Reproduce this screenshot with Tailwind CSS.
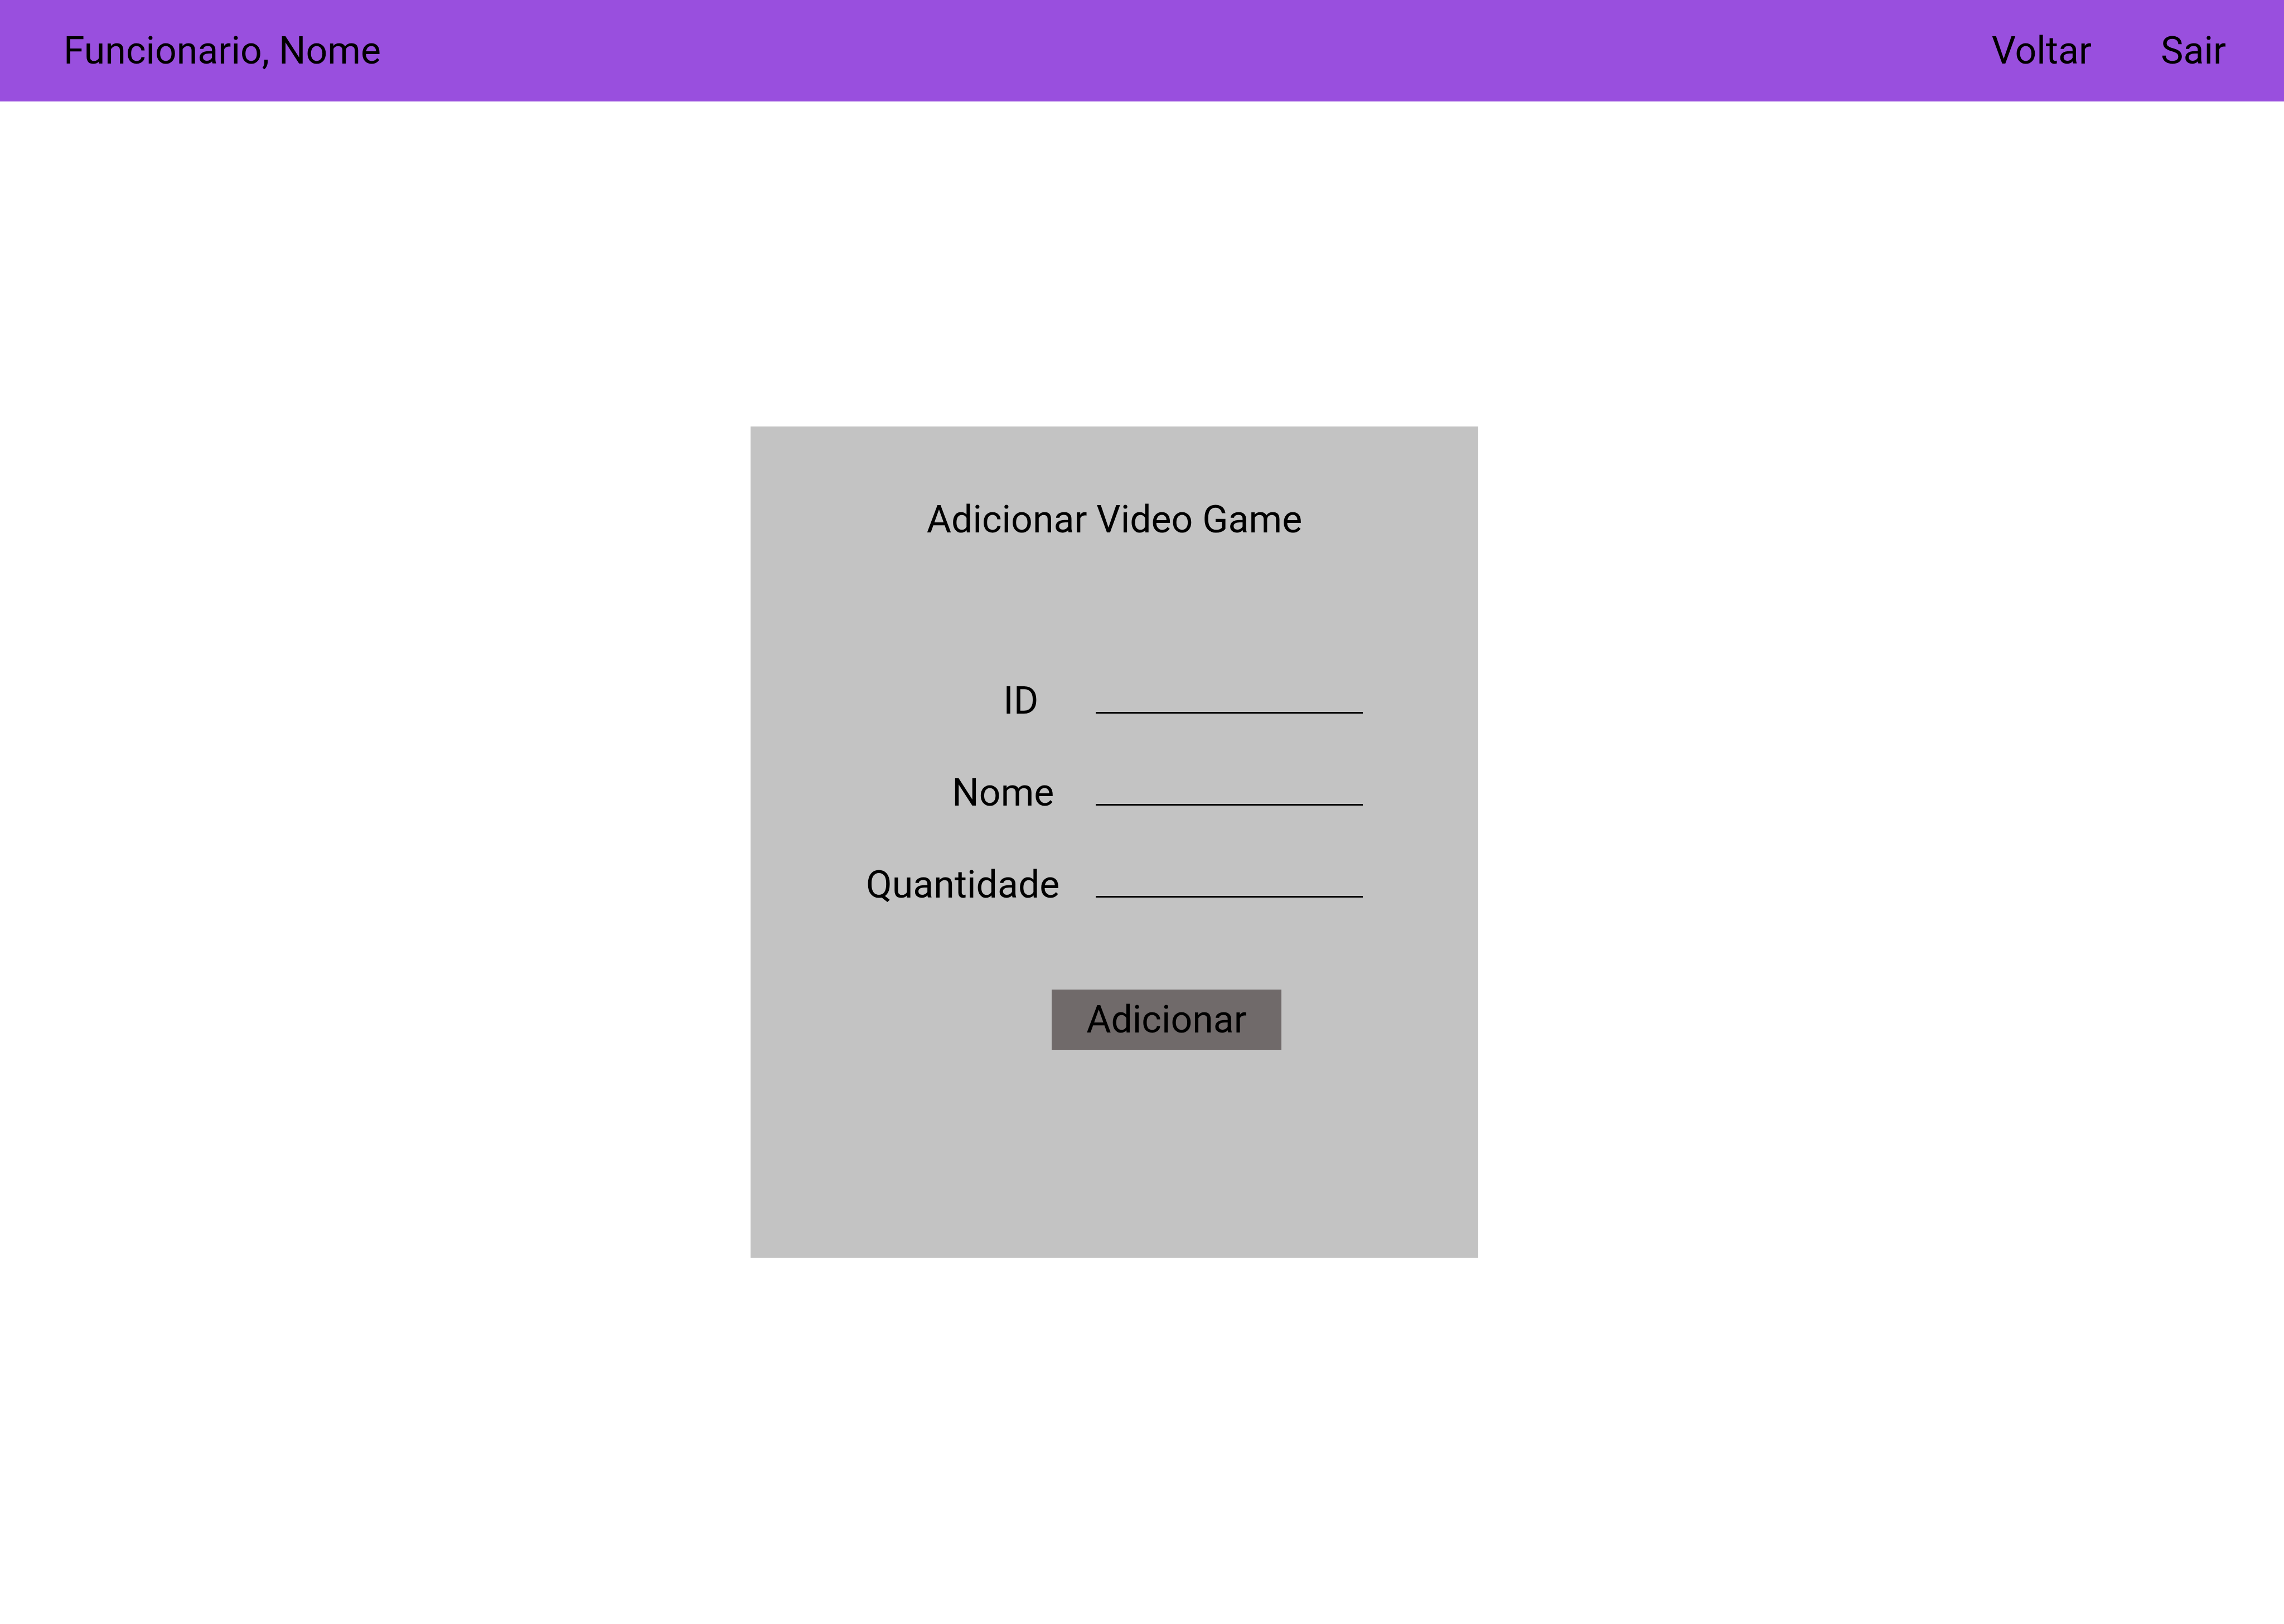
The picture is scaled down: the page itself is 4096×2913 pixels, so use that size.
<!DOCTYPE html>
<html lang="pt-BR">
<head>
<meta charset="utf-8">
<meta name="viewport" content="width=device-width, initial-scale=1">
<title>Adicionar Video Game</title>
<script src="https://cdn.jsdelivr.net/npm/@tailwindcss/browser@4"></script>
</head>
<body class="min-h-screen bg-white font-[Roboto,sans-serif] text-[68px] leading-[80px] text-black">
  <header class="flex h-[182px] items-center justify-between bg-[#994fde] pr-[104px] pl-[114px]">
    <p>Funcionario, Nome</p>
    <nav class="flex gap-[124px]">
      <a href="#voltar">Voltar</a>
      <a href="#sair">Sair</a>
    </nav>
  </header>

  <main class="flex justify-center pt-[583px] pr-[99px]">
    <form class="flex w-[1305px] flex-col bg-[#c3c3c3] px-[207px] pt-[127px] pb-[373px]">
      <h1 class="text-center">Adicionar Video Game</h1>

      <div class="mt-[245px] grid grid-cols-[auto_1fr] gap-x-[65px] gap-y-[85px]">
        <label for="id" class="pr-[38px] text-right">ID</label>
        <input id="id" name="id" type="text" class="h-[63px] w-full min-w-0 border-b-3 border-black bg-transparent outline-none">

        <label for="nome" class="pr-[10px] text-right">Nome</label>
        <input id="nome" name="nome" type="text" class="h-[63px] w-full min-w-0 border-b-3 border-black bg-transparent outline-none">

        <label for="quantidade" class="text-right">Quantidade</label>
        <input id="quantidade" name="quantidade" type="text" class="h-[63px] w-full min-w-0 border-b-3 border-black bg-transparent outline-none">
      </div>

      <button type="button" class="mt-[148px] ml-[333px] h-[108px] w-[412px] bg-[#706a6a]">Adicionar</button>
    </form>
  </main>
</body>
</html>
